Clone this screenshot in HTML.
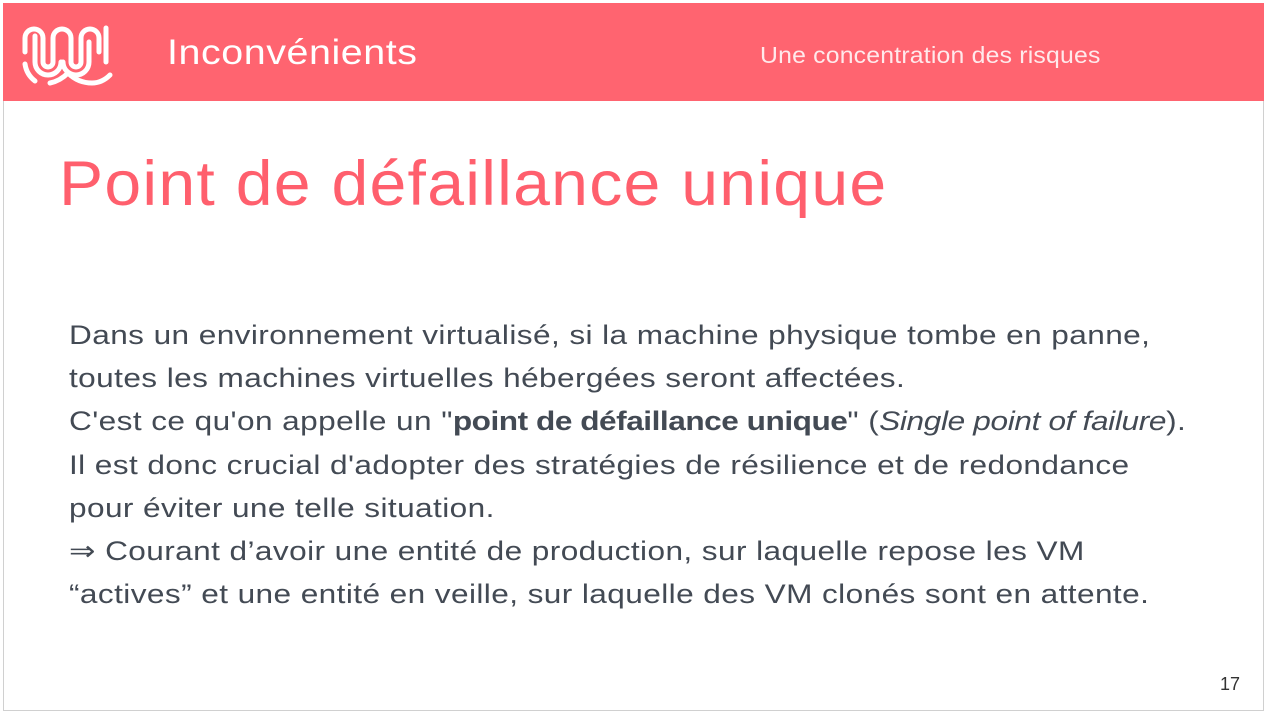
<!DOCTYPE html>
<html><head><meta charset="utf-8"><style>
*{margin:0;padding:0}
body{width:1267px;height:713px;background:#fff;position:relative;overflow:hidden;font-family:"Liberation Sans",sans-serif}
.frame{position:absolute;left:3px;top:3px;width:1259px;height:706px;border:1px solid #d0d0d0}
.hdr{position:absolute;left:3px;top:3px;width:1261px;height:98px;background:#ff6470}
.h1{position:absolute;left:167px;top:33px;color:#fff;font-size:35px;letter-spacing:0.5px;white-space:nowrap;transform:scaleX(1.126);transform-origin:left}
.sub{position:absolute;left:760px;top:42px;color:#ffe9eb;font-size:23px;white-space:nowrap;letter-spacing:0.2px;transform:scaleX(1.076);transform-origin:left}
.title{position:absolute;left:59px;top:148px;color:#ff5f6d;font-size:63px;white-space:nowrap;letter-spacing:1.2px;transform:scaleX(1.05);transform-origin:left}
.body{position:absolute;left:69px;top:314px;color:#434a54;font-size:27px;line-height:43.2px;white-space:nowrap;letter-spacing:0.35px;transform:scaleX(1.17);transform-origin:left}
.body b{letter-spacing:-0.4px}
.body i{letter-spacing:-0.3px}
.num{position:absolute;left:1220px;top:674px;font-size:18px;color:#333}
</style></head><body>
<div class="frame"></div>
<div class="hdr"></div>
<svg style="position:absolute;left:20px;top:22px" width="96" height="68" viewBox="0 0 96 68" fill="none" stroke="#fff" stroke-width="5" stroke-linecap="round">
<path d="M5 30 V16 a9 9 0 0 1 18 0 V40 a5 5 0 0 0 10 0 V16 a9 9 0 0 1 18 0 V40 a5 5 0 0 0 10 0 V16 a9 9 0 0 1 18 0 V30"/>
<path d="M15 14 V40 a13 13 0 0 0 26 0 M43 40 a13 13 0 0 0 26 0 V20"/>
<path d="M86 6 V40"/>
<path d="M5 42 a26 26 0 0 0 10 17 M30 61 q10 -2 18 -10 q10 10 24 10 q10 0 18 -8"/>
</svg>
<div class="h1">Inconvénients</div>
<div class="sub">Une concentration des risques</div>
<div class="title">Point de défaillance unique</div>
<div class="body">Dans un environnement virtualisé, si la machine physique tombe en panne,<br>toutes les machines virtuelles hébergées seront affectées.<br>C'est ce qu'on appelle un "<b>point de défaillance unique</b>" (<i>Single point of failure</i>).<br>Il est donc crucial d'adopter des stratégies de résilience et de redondance<br>pour éviter une telle situation.<br>⇒ Courant d’avoir une entité de production, sur laquelle repose les VM<br>“actives” et une entité en veille, sur laquelle des VM clonés sont en attente.</div>
<div class="num">17</div>
</body></html>
